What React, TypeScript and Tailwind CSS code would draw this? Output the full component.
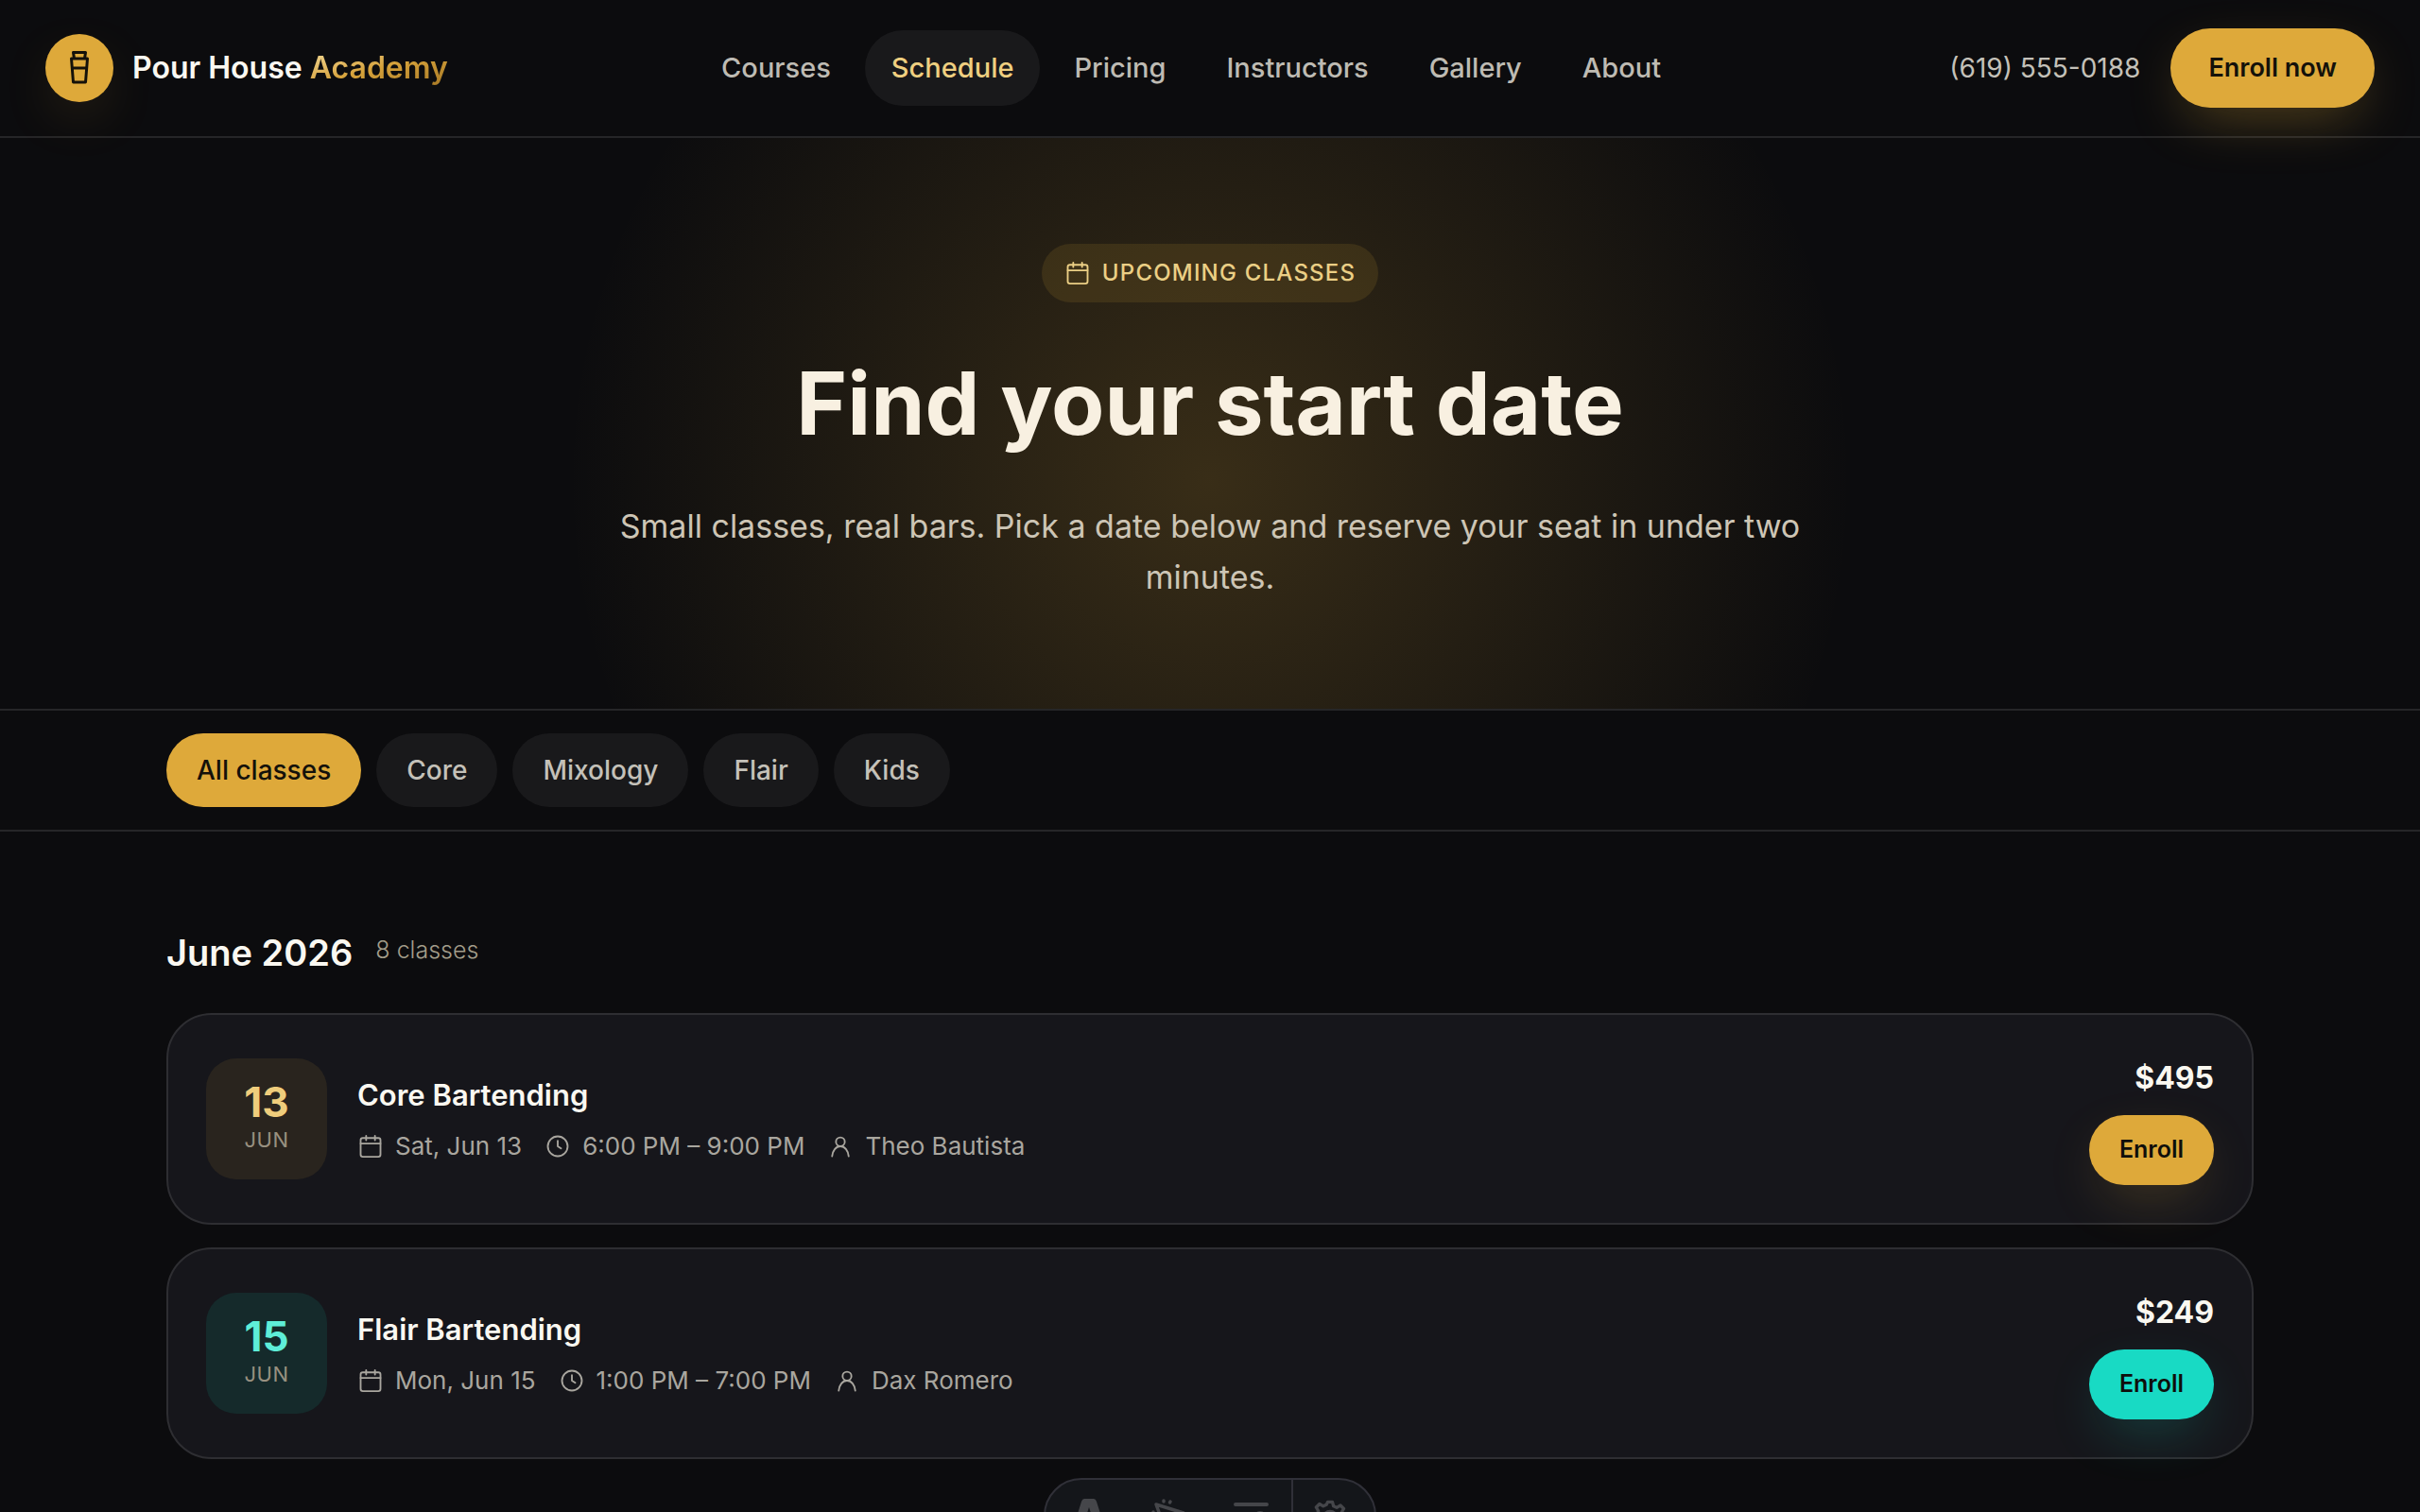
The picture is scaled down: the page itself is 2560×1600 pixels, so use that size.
import React, { useState } from 'react';

type Tone = 'gold' | 'teal';

interface ClassEntry {
  id: number;
  day: string;
  month: string;
  title: string;
  date: string;
  time: string;
  instructor: string;
  price: string;
  tone: Tone;
}

const NAV_LINKS = ['Courses', 'Schedule', 'Pricing', 'Instructors', 'Gallery', 'About'];
const FILTERS = ['All classes', 'Core', 'Mixology', 'Flair', 'Kids'];

const CLASSES: ClassEntry[] = [
  { id: 1, day: '13', month: 'Jun', title: 'Core Bartending', date: 'Sat, Jun 13', time: '6:00 PM – 9:00 PM', instructor: 'Theo Bautista', price: '$495', tone: 'gold' },
  { id: 2, day: '15', month: 'Jun', title: 'Flair Bartending', date: 'Mon, Jun 15', time: '1:00 PM – 7:00 PM', instructor: 'Dax Romero', price: '$249', tone: 'teal' },
];

const TONES = {
  gold: {
    badge: 'bg-[#29241e]',
    day: 'text-[#efcd7c]',
    button: 'bg-[#dea93a] shadow-[0_20px_60px_-16px_rgba(222,169,58,0.3)]',
  },
  teal: {
    badge: 'bg-[#152a2b]',
    day: 'text-[#5eeed8]',
    button: 'bg-[#18dac4] shadow-[0_20px_60px_-16px_rgba(24,218,196,0.3)]',
  },
};

const Icon = ({ className, children }: { className: string; children: React.ReactNode }) => (
  <svg viewBox="0 0 24 24" fill="none" stroke="currentColor" strokeWidth="1.6" strokeLinecap="round" strokeLinejoin="round" className={className} aria-hidden="true">
    {children}
  </svg>
);

const CalendarIcon = ({ className }: { className: string }) => (
  <Icon className={className}>
    <rect x="3" y="4.5" width="18" height="17" rx="2" />
    <path d="M3 9.5h18M8 2.5v4M16 2.5v4" />
  </Icon>
);

const ClockIcon = ({ className }: { className: string }) => (
  <Icon className={className}>
    <circle cx="12" cy="12" r="9" />
    <path d="M12 7v5l3 2" />
  </Icon>
);

const UserIcon = ({ className }: { className: string }) => (
  <Icon className={className}>
    <circle cx="12" cy="8" r="4" />
    <path d="M4.500 21c.5-5 3.300-9 7.500-9s7 4 7.500 9" />
  </Icon>
);

const ShakerIcon = ({ className }: { className: string }) => (
  <svg viewBox="0 0 40 40" fill="none" stroke="currentColor" strokeWidth="3" strokeLinejoin="round" strokeLinecap="round" className={className} aria-hidden="true">
    <path d="M13.500 3.500h13l-1 6.500h-11zM11.500 10h17l-2 25h-13zM12.500 20h15" />
  </svg>
);

const Header = () => (
  <header className="relative z-10 flex items-center justify-between h-[146px] px-12 border-b-2 border-[#262628]">
    <a href="#" className="flex items-center gap-5 text-[32px] font-semibold text-[#faf8f1]">
      <span className="flex items-center justify-center size-18 rounded-full bg-[#dea93a] text-[#14110a] shadow-[0_20px_60px_-16px_rgba(222,169,58,0.3)]">
        <ShakerIcon className="size-10" />
      </span>
      <span>
        Pour House{' '}
        <span className="bg-linear-to-br from-[#f3dc98] via-[#d6a23a] to-[#a67825] bg-clip-text text-transparent">Academy</span>
      </span>
    </a>
    <nav className="flex items-center gap-2 mr-4">
      {NAV_LINKS.map(link => (
        <a
          key={link}
          href="#"
          className={`px-7 h-20 flex items-center rounded-full text-[29px] font-medium ${link === 'Schedule' ? 'bg-[#19191b] text-[#efcf80]' : 'text-[#bebbb3]'}`}
        >
          {link}
        </a>
      ))}
    </nav>
    <div className="flex items-center gap-8">
      <a href="tel:6195550188" className="text-[28px] text-[#c4c1b9]">(619) 555-0188</a>
      <button type="button" className="h-[84px] px-10 rounded-full bg-[#dea93a] text-[27px] font-semibold text-[#14110a] shadow-[0_20px_60px_-16px_rgba(222,169,58,0.4)]">
        Enroll now
      </button>
    </div>
  </header>
);

const Hero = () => (
  <section className="flex flex-col items-center px-12 py-28 text-center bg-[radial-gradient(circle_680px_at_50%_60%,rgba(222,169,58,0.21),rgba(222,169,58,0))]">
    <p className="flex items-center gap-3 h-[62px] px-6 rounded-full bg-[#dea93a]/12 text-2xl font-medium tracking-wider uppercase text-[#ebcf85]">
      <CalendarIcon className="size-7" />
      Upcoming classes
    </p>
    <h1 className="mt-[50px] text-[92px] leading-[114px] font-bold text-[#f8f0e1]">Find your start date</h1>
    <p className="mt-[46px] max-w-[1344px] text-[34px] leading-[54px] text-[#cdc5b5]">
      Small classes, real bars. Pick a date below and reserve your seat in under two minutes.
    </p>
  </section>
);

const ClassCard = ({ entry }: { entry: ClassEntry }) => {
  const tone = TONES[entry.tone];
  return (
    <li className="flex items-center gap-8 h-56 px-10 rounded-[48px] border-2 border-[#2e2e32] bg-[#16161b]">
      <div className={`flex flex-col items-center justify-center size-32 rounded-[32px] ${tone.badge}`}>
        <span className={`text-[44px] leading-11 font-bold ${tone.day}`}>{entry.day}</span>
        <span className="text-[22px] leading-9 tracking-wide uppercase text-[#989080]">{entry.month}</span>
      </div>
      <div className="flex-1">
        <h3 className="text-[31px] leading-12 font-semibold text-[#faf8f1]">{entry.title}</h3>
        <div className="mt-[10px] flex items-center gap-6 text-[26px] leading-10 text-[#a9a69f]">
          <span className="flex items-center gap-3"><CalendarIcon className="size-7" />{entry.date}</span>
          <span className="flex items-center gap-3"><ClockIcon className="size-7" />{entry.time}</span>
          <span className="flex items-center gap-3"><UserIcon className="size-7" />{entry.instructor}</span>
        </div>
      </div>
      <div className="flex flex-col items-end gap-3">
        <span className="text-[32px] leading-[54px] font-bold text-[#faf8f1]">{entry.price}</span>
        <button type="button" className={`h-[74px] px-8 rounded-full text-[25px] font-semibold text-[#0f0e0b] ${tone.button}`}>Enroll</button>
      </div>
    </li>
  );
};

const Dock = () => (
  <div className="fixed left-1/2 -translate-x-1/2 -bottom-11 z-20 flex h-20 rounded-[40px] border-2 border-[#303038] bg-[#14161a] text-[#45464a]">
    <button type="button" aria-label="Text" className="w-[88px] pl-1 flex justify-center pt-5">
      <svg viewBox="0 0 40 40" fill="currentColor" className="size-10"><path d="M15 0h10q2 0 3 3l11 35h-8l-3-8H12l-3 8H1L12 3q1-3 3-3zM20 9l-5 15h10z" fillRule="evenodd" /></svg>
    </button>
    <button type="button" aria-label="Effects" className="w-[86px] flex justify-center pt-5">
      <svg viewBox="0 0 40 40" fill="none" stroke="currentColor" strokeWidth="3.500" strokeLinecap="round" strokeLinejoin="round" className="size-10">
        <path d="M6 6l29 9-14 7-4 14z" />
        <path d="M14 2v1M21 3l-.5 1M3 14v1" />
      </svg>
    </button>
    <button type="button" aria-label="Layout" className="w-[86px] flex justify-center pt-5">
      <svg viewBox="0 0 40 40" fill="none" stroke="currentColor" strokeWidth="4" strokeLinecap="round" className="size-10">
        <path d="M4 6h33M4 20h33M4 34h33" />
        <circle cx="30" cy="20" r="5" fill="currentColor" />
      </svg>
    </button>
    <button type="button" aria-label="Settings" className="w-[88px] pr-2 flex justify-center pt-5 border-l-2 border-[#303038]">
      <svg viewBox="0 0 24 24" fill="none" stroke="currentColor" strokeWidth="2" strokeLinejoin="round" className="size-10">
        <circle cx="12" cy="12" r="4" />
        <path d="M10.500 2h3l.7 2.700 2 .9 2.400-1.400 2.100 2.100-1.400 2.400.9 2 2.700.7v3l-2.700.7-.9 2 1.400 2.400-2.100 2.100-2.400-1.400-2 .9-.7 2.700h-3l-.7-2.700-2-.9-2.400 1.400-2.100-2.100 1.400-2.400-.9-2L1 13.500v-3l2.700-.7.9-2-1.400-2.400 2.100-2.100 2.400 1.400 2-.9z" />
      </svg>
    </button>
  </div>
);

export default function App() {
  const [filter, setFilter] = useState('All classes');

  return (
    <div className="min-h-screen bg-[#0c0c0e] font-['Inter',sans-serif]">
      <Header />
      <Hero />
      <div className="border-y-2 border-[#262628] bg-[#0c0c0e]">
        <div className="mx-auto max-w-[2304px] px-12 py-6 flex gap-4">
          {FILTERS.map(name => (
            <button
              key={name}
              type="button"
              onClick={() => setFilter(name)}
              className={`h-[78px] px-8 rounded-full text-[28px] font-medium ${name === filter ? 'bg-[#dea93a] text-[#14110a]' : 'bg-[#19191b] text-[#c4c1b9]'}`}
            >
              {name}
            </button>
          ))}
        </div>
      </div>
      <main className="mx-auto max-w-[2304px] px-12 pt-24">
        <h2 className="flex items-center gap-6 h-16 text-[38px] font-semibold text-[#faf8f1]">
          June 2026
          <span className="pb-1 text-[25px] font-light text-[#a39d8a]">8 classes</span>
        </h2>
        <ul className="mt-8 flex flex-col gap-6">
          {CLASSES.map(entry => <ClassCard key={entry.id} entry={entry} />)}
        </ul>
      </main>
      <Dock />
    </div>
  );
}
